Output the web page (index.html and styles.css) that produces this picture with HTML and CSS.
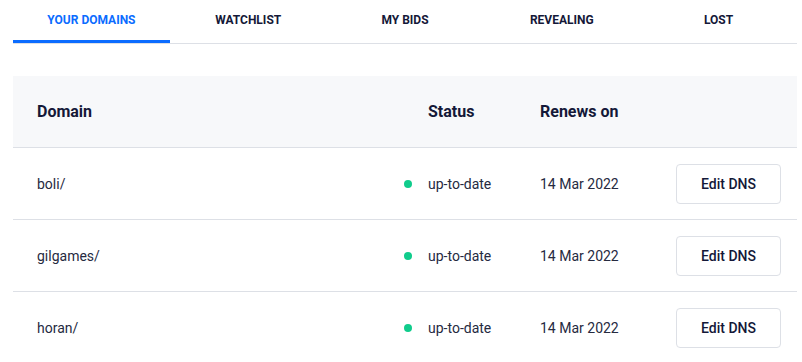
FILE: index.html
```html
<!DOCTYPE html>
<html lang="en">
<head>
    <meta charset="UTF-8" />
    <title>Your Domains</title>
    <meta name="viewport" content="width=device-width, initial-scale=1.0" />
    <link rel="stylesheet" href="styles.css">
</head>
<body>

    <div class="page">
        <nav class="tabs">
            <a class="tab active" href="#">Your Domains</a>
            <a class="tab" href="#">Watchlist</a>
            <a class="tab" href="#">My Bids</a>
            <a class="tab" href="#">Revealing</a>
            <a class="tab" href="#">Lost</a>
        </nav>

        <div class="domains">
            <div class="row head">
                <div>Domain</div>
                <div class="status-head">Status</div>
                <div>Renews on</div>
                <div></div>
            </div>

            <div class="row">
                <div>boli/</div>
                <div class="status"><span class="dot"></span>up-to-date</div>
                <div>14 Mar 2022</div>
                <div><button>Edit DNS</button></div>
            </div>

            <div class="row">
                <div>gilgames/</div>
                <div class="status"><span class="dot"></span>up-to-date</div>
                <div>14 Mar 2022</div>
                <div><button>Edit DNS</button></div>
            </div>

            <div class="row">
                <div>horan/</div>
                <div class="status"><span class="dot"></span>up-to-date</div>
                <div>14 Mar 2022</div>
                <div><button>Edit DNS</button></div>
            </div>
        </div>
    </div>

</body>
</html>
```

FILE: styles.css
```css
:root {
    --blue: #0b6cff;
    --ink: #141838;
    --text: #262a3f;
    --line: #dde0e6;
    --head-bg: #f7f8fa;
    --green: #10cc8c;
}

* {
    box-sizing: border-box;
    margin: 0;
    padding: 0;
}

body {
    font-family: Roboto, 'Liberation Sans', sans-serif;
    background: #fff;
    color: var(--text);
}

.page {
    padding: 0 5px 0 13px;
}

/* Tabs */
.tabs {
    display: grid;
    grid-template-columns: repeat(5, 1fr);
    border-bottom: 1px solid var(--line);
}

.tab {
    height: 43px;
    padding-top: 13px;
    text-align: center;
    font-size: 12px;
    font-weight: 700;
    text-transform: uppercase;
    color: var(--ink);
    text-decoration: none;
    border-bottom: 3px solid transparent;
}

.tab.active {
    color: var(--blue);
    border-bottom-color: var(--blue);
}

/* Table */
.domains {
    margin-top: 32px;
}

.row {
    display: grid;
    grid-template-columns: 1fr 136px 136px 105px;
    align-items: center;
    height: 72px;
    padding: 0 16px 0 24px;
    border-bottom: 1px solid var(--line);
    font-size: 14px;
}

.row.head {
    background: var(--head-bg);
    font-size: 16px;
    font-weight: 700;
    color: var(--ink);
}

.status-head {
    padding-left: 24px;
}

.status {
    display: flex;
    align-items: center;
}

.dot {
    width: 8px;
    height: 8px;
    border-radius: 50%;
    background: var(--green);
    margin-right: 16px;
}

button {
    width: 105px;
    height: 40px;
    background: #fff;
    border: 1px solid var(--line);
    border-radius: 4px;
    font-family: inherit;
    font-size: 14px;
    font-weight: 500;
    color: var(--ink);
    cursor: pointer;
}
```
